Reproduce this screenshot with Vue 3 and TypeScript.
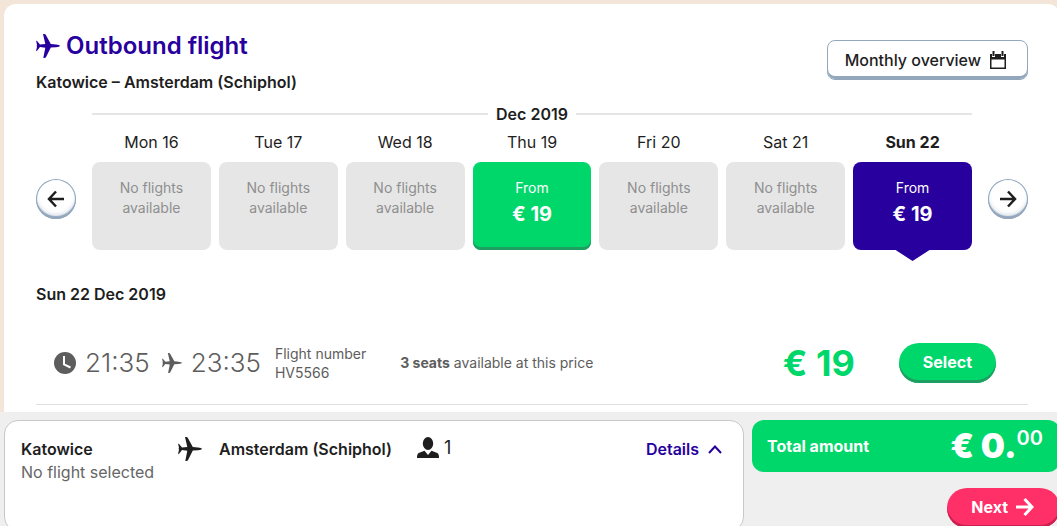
<script setup lang="ts">
interface Day {
  label: string
  price: number | null
  selected?: boolean
}

const days: Day[] = [
  { label: 'Mon 16', price: null },
  { label: 'Tue 17', price: null },
  { label: 'Wed 18', price: null },
  { label: 'Thu 19', price: 19 },
  { label: 'Fri 20', price: null },
  { label: 'Sat 21', price: null },
  { label: 'Sun 22', price: 19, selected: true },
]

const planePath =
  'M24 11.800c0 .7-2 1.300-4 1.400l-5.200.4L9.800 23.500 8.600 24H7.300l2-10.300-5.300-.6-2.700 3.300L0 17.200l1-4.400L.6 11.800l.4-1L0 6.500l1.300.7L4 10.500l5.300-.6L7 0h1.400l1.200.5 5.200 9.500 5.200.4c2 .1 4 .7 4 1.400z'
</script>

<template>
  <div class="page">
    <main class="panel">
      <header class="head">
        <div>
          <h1 class="title">
            <svg class="plane" viewBox="0 0 24 24" aria-hidden="true"><path :d="planePath" /></svg>
            Outbound flight
          </h1>
          <p class="route">Katowice – Amsterdam (Schiphol)</p>
        </div>
        <button class="overview" type="button">
          Monthly overview
          <svg class="calendar" viewBox="0 0 18 18" aria-hidden="true">
            <path fill-rule="evenodd" d="M1 3h16v15H1zM2.500 8.500v8h13v-8z" />
            <path class="ring" d="M4.500 1v5M13.500 1v5" />
            <path class="pin" d="M4.500 0v5M13.500 0v5" />
          </svg>
        </button>
      </header>

      <section class="week">
        <button class="round" type="button" aria-label="Previous days">
          <svg viewBox="0 0 18 18" aria-hidden="true"><path d="M17 9H2M9 1.500 2 9l7 7.500" /></svg>
        </button>
        <div class="calendar-strip">
          <h2 class="month">Dec 2019</h2>
          <ol class="days">
            <li v-for="day in days" :key="day.label" class="day" :class="{ current: day.selected }">
              <span class="label">{{ day.label }}</span>
              <button v-if="day.price !== null" class="tile fare" type="button">
                <span>From</span>
                <strong>€ {{ day.price }}</strong>
              </button>
              <div v-else class="tile">No flights<br />available</div>
            </li>
          </ol>
        </div>
        <button class="round" type="button" aria-label="Next days">
          <svg viewBox="0 0 18 18" aria-hidden="true"><path d="M1 9h15M9 1.500 16 9l-7 7.500" /></svg>
        </button>
      </section>

      <h2 class="date">Sun 22 Dec 2019</h2>
      <section class="flight">
        <svg class="clock" viewBox="0 0 22 22" aria-hidden="true">
          <circle cx="11" cy="11" r="11" />
          <path d="M10 4v8.300l6.500 3.200" />
        </svg>
        <time class="time">21:35</time>
        <svg class="plane small" viewBox="0 0 24 24" aria-hidden="true"><path :d="planePath" /></svg>
        <time class="time">23:35</time>
        <p class="number">Flight number<br />HV5566</p>
        <p class="seats"><strong>3 seats</strong> available at this price</p>
        <strong class="price">€ 19</strong>
        <button class="pill" type="button">Select</button>
      </section>
    </main>

    <footer class="footer">
      <section class="summary">
        <div class="origin">
          <strong>Katowice</strong>
          <span>No flight selected</span>
        </div>
        <svg class="plane" viewBox="0 0 24 24" aria-hidden="true"><path :d="planePath" /></svg>
        <strong class="destination">Amsterdam (Schiphol)</strong>
        <span class="people">
          <svg viewBox="0 0 22 21" aria-hidden="true">
            <ellipse cx="11" cy="6.500" rx="5.200" ry="6.500" />
            <path d="M0 21c0-4 1-5 3-5.600l4.500-1.600L11 18l3.500-4.200 4.500 1.600c2 .6 3 1.600 3 5.600z" />
          </svg>
          1
        </span>
        <a class="details" href="#details">
          Details
          <svg viewBox="0 0 14 9" aria-hidden="true"><path d="M1 8l6-6.500L13 8" /></svg>
        </a>
      </section>
      <section class="checkout">
        <div class="total">
          <span>Total amount</span>
          <strong class="amount">€ 0.<sup>00</sup></strong>
        </div>
        <button class="pill next" type="button">
          Next
          <svg viewBox="0 0 18 18" aria-hidden="true"><path d="M0 9h16M8.500 1 16 9l-7.500 8" /></svg>
        </button>
      </section>
    </footer>
  </div>
</template>

<style>
body {
  margin: 0;
}
</style>

<style scoped>
.page {
  display: flex;
  flex-direction: column;
  box-sizing: border-box;
  height: 100vh;
  overflow: hidden;
  padding-top: 4px;
  background: #f3e6d9;
  color: #1e1e1e;
  font-family: Inter, "Open Sans", sans-serif;
  font-size: 16px;
  line-height: 24px;
}

h1,
h2,
p,
ol {
  margin: 0;
  padding: 0;
}

button {
  border: 0;
  font: inherit;
  color: inherit;
  cursor: pointer;
}

svg {
  flex: none;
}

.panel {
  flex: none;
  margin: 0 -3px 0 4px;
  padding: 26px 32px 7px;
  border-radius: 12px 12px 0 0;
  background: #fff;
}

.head {
  display: flex;
  justify-content: space-between;
}

.title {
  display: flex;
  align-items: center;
  gap: 6px;
  color: #28009e;
  font-size: 24px;
  line-height: 32px;
  font-weight: 600;
}

.plane {
  width: 24px;
  height: 24px;
  fill: currentColor;
}

.route {
  margin-top: 8px;
  font-weight: 600;
}

.overview {
  display: flex;
  align-items: center;
  gap: 8px;
  height: 40px;
  margin-top: 10px;
  padding: 0 20px 0 17px;
  border: 1px solid #93a7bc;
  border-radius: 8px;
  background: #fff;
  box-shadow: inset 0 -3px 0 #93a7bc;
  font-weight: 500;
}

.calendar {
  width: 18px;
  height: 18px;
  fill: #1e1e1e;
}

.ring {
  stroke: #fff;
  stroke-width: 3;
}

.pin {
  stroke: #1e1e1e;
  stroke-width: 2;
}

.week {
  display: flex;
  gap: 16px;
  margin-top: 8px;
}

.round {
  flex: none;
  display: grid;
  place-items: center;
  width: 40px;
  height: 40px;
  margin-top: 77px;
  padding: 0;
  border-radius: 50%;
  background: #fff;
  box-shadow: inset 0 0 0 1px #93a7bc, inset 0 -3px 1px #93a7bc, inset 0 -5px 4px #dfe5ec;
}

.round svg {
  width: 18px;
  height: 18px;
  fill: none;
  stroke: #1e1e1e;
  stroke-width: 2.5;
}

.calendar-strip {
  flex: 1;
}

.month {
  display: flex;
  align-items: center;
  gap: 8px;
  font-size: 16px;
  line-height: 24px;
  font-weight: 600;
}

.month::before,
.month::after {
  content: "";
  flex: 1;
  height: 2px;
  background: #e5e5e5;
}

.days {
  display: grid;
  grid-template-columns: repeat(7, 1fr);
  gap: 8px;
  margin-top: 4px;
  list-style: none;
  text-align: center;
}

.day {
  display: flex;
  flex-direction: column;
  gap: 8px;
}

.tile {
  position: relative;
  box-sizing: border-box;
  height: 88px;
  padding: 16px 0;
  border-radius: 8px;
  background: #e6e6e6;
  color: #8f8f8f;
  font-size: 14px;
  line-height: 20px;
}

.fare {
  display: flex;
  flex-direction: column;
  align-items: center;
  gap: 4px;
  background: #00d76b;
  box-shadow: inset 0 -3px 0 #1f9e62;
  color: #fff;
}

.fare strong {
  font-size: 20px;
  line-height: 24px;
}

.current .label {
  font-weight: 700;
}

.current .fare {
  background: #28009e;
  box-shadow: none;
}

.current .fare::after {
  content: "";
  position: absolute;
  top: 100%;
  left: 50%;
  width: 34px;
  height: 11px;
  margin-left: -17px;
  background: #28009e;
  clip-path: polygon(0 0, 100% 0, 50% 100%);
}

.date {
  margin-top: 32px;
  font-size: 16px;
  line-height: 24px;
  font-weight: 600;
}

.flight {
  display: flex;
  align-items: center;
  box-sizing: border-box;
  height: 99px;
  padding: 15px 32px 0 18px;
  border-bottom: 1px solid #e0e0e0;
  color: #5d5d5d;
}

.clock {
  width: 22px;
  height: 22px;
  margin-right: 9px;
  fill: #5d5d5d;
}

.clock path {
  fill: none;
  stroke: #fff;
  stroke-width: 2;
}

.time {
  font-size: 26px;
  font-weight: 300;
}

.small {
  width: 20px;
  height: 20px;
  margin: 0 9px 0 12px;
}

.number {
  margin-left: 14px;
  font-size: 14px;
  line-height: 19px;
}

.seats {
  margin-left: 34px;
  font-size: 14px;
}

.price {
  margin-left: auto;
  color: #00d76b;
  font-size: 36px;
}

.pill {
  height: 40px;
  margin-left: 44px;
  padding: 0 24px 2px;
  border-radius: 20px;
  background: #00d76b;
  box-shadow: inset 0 -3px 0 #1f9e62;
  color: #fff;
  font-weight: 700;
}

.footer {
  flex: 1 0 auto;
  display: grid;
  grid-template-columns: minmax(0, 740fr) minmax(0, 308fr);
  gap: 8px;
  margin-right: -3px;
  padding: 8px 0 0 4px;
  background: #efefef;
}

.summary {
  display: flex;
  align-items: flex-start;
  min-height: 74px;
  margin-bottom: -3px;
  padding: 16px 21px 16px 16px;
  border: 1px solid #c8c8c8;
  border-radius: 14px;
  background: #fff;
}

.origin {
  display: grid;
  width: 157px;
}

.origin span {
  color: #666;
  line-height: 22px;
}

.origin strong,
.destination {
  font-weight: 600;
}

.destination {
  margin-left: 17px;
}

.people {
  display: flex;
  align-items: center;
  gap: 5px;
  margin-left: 25px;
  font-size: 18px;
  line-height: 20px;
}

.people svg {
  width: 22px;
  height: 21px;
  fill: #1e1e1e;
}

.details {
  display: flex;
  align-items: center;
  gap: 9px;
  margin-left: auto;
  color: #28009e;
  font-weight: 600;
  text-decoration: none;
}

.details svg {
  width: 14px;
  height: 9px;
  fill: none;
  stroke: currentColor;
  stroke-width: 2;
}

.checkout {
  display: flex;
  flex-direction: column;
  align-items: flex-end;
  gap: 16px;
}

.total {
  display: flex;
  align-items: center;
  justify-content: space-between;
  align-self: stretch;
  box-sizing: border-box;
  height: 52px;
  padding: 0 17px 0 15px;
  border-radius: 12px;
  background: #00d76b;
  color: #fff;
  font-weight: 700;
}

.amount {
  display: flex;
  align-items: center;
  font-size: 34px;
  line-height: 48px;
}

.amount sup {
  align-self: flex-start;
  font-size: 20px;
  line-height: 32px;
  font-weight: 600;
}

.next {
  display: flex;
  align-items: center;
  gap: 8px;
  padding: 0 26px 2px 24px;
  background: #ff2f68;
  box-shadow: inset 0 -3px 0 #c9204f;
}

.next svg {
  width: 18px;
  height: 18px;
  fill: none;
  stroke: currentColor;
  stroke-width: 3;
}
</style>
